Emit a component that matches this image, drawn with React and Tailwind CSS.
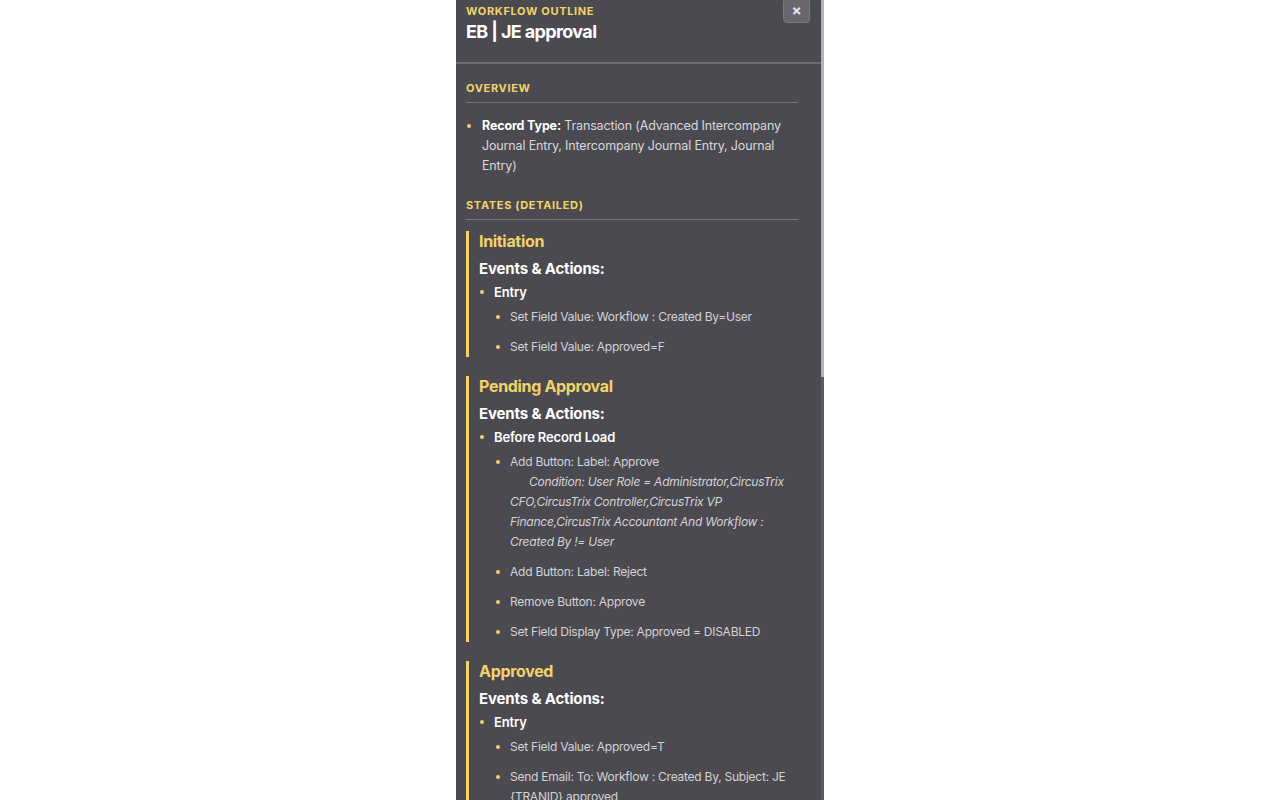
import React from 'react';

const states = [
  {
    name: 'Initiation',
    events: [
      {
        trigger: 'Entry',
        actions: [
          { text: 'Set Field Value: Workflow : Created By=User' },
          { text: 'Set Field Value: Approved=F' },
        ],
      },
    ],
  },
  {
    name: 'Pending Approval',
    events: [
      {
        trigger: 'Before Record Load',
        actions: [
          {
            text: 'Add Button: Label: Approve',
            condition:
              'Condition: User Role = Administrator,CircusTrix CFO,CircusTrix Controller,CircusTrix VP Finance,CircusTrix Accountant And Workflow : Created By != User',
          },
          { text: 'Add Button: Label: Reject' },
          { text: 'Remove Button: Approve' },
          { text: 'Set Field Display Type: Approved = DISABLED' },
        ],
      },
    ],
  },
  {
    name: 'Approved',
    events: [
      {
        trigger: 'Entry',
        actions: [
          { text: 'Set Field Value: Approved=T' },
          { text: 'Send Email: To: Workflow : Created By, Subject: JE {TRANID} approved' },
        ],
      },
    ],
  },
];

const Dot = ({ wide }) => (
  <span className={`${wide ? 'w-[16px]' : 'w-[15px]'} shrink-0 flex pt-[8px] pl-[1px]`}>
    <span className="w-[4px] h-[4px] rounded-full bg-[#f3d368]" />
  </span>
);

const SectionTitle = ({ children, className = '' }) => (
  <div className={className}>
    <div className="text-[11px] leading-4 font-bold tracking-[0.06em] uppercase text-[#f3d368]">
      {children}
    </div>
    <div className="h-px bg-[#76757b] mt-[6px]" />
  </div>
);

const StateBlock = ({ state }) => (
  <div className="border-l-[3px] border-[#f3d368] pl-[10px] mb-[19px]">
    <div className="text-[16px] leading-5 font-bold tracking-[-0.02em] text-[#f3d368]">{state.name}</div>
    <div className="text-[15px] leading-[22px] font-bold tracking-[-0.01em] text-white mt-[7px]">Events &amp; Actions:</div>
    <ul className="mt-[2px]">
      {state.events.map((ev) => (
        <li key={ev.trigger}>
          <div className="flex text-[13px] leading-5 font-semibold tracking-[-0.01em] text-white">
            <Dot />
            <span>{ev.trigger}</span>
          </div>
          <ul className="mt-[5px] pl-[16px]">
            {ev.actions.map((a, i) => (
              <li
                key={a.text}
                className={`flex text-[12px] leading-5 tracking-[-0.02em] text-[#d4d3d6] ${i < ev.actions.length - 1 ? 'mb-[10px]' : ''}`}
              >
                <Dot />
                <span>
                  {a.text}
                  {a.condition && (
                    <>
                      <br />
                      <span className="italic pl-[19px]">{a.condition}</span>
                    </>
                  )}
                </span>
              </li>
            ))}
          </ul>
        </li>
      ))}
    </ul>
  </div>
);

export default function App() {
  return (
    <div className="min-h-screen bg-white flex justify-center font-['Inter','Noto_Sans',sans-serif]">
      <div className="relative w-[368px] h-[800px] overflow-hidden bg-[#4b4a50]">
        {/* header */}
        <div className="relative pl-[10px] pr-[26px] pt-[3px] pb-[18px]">
          <div className="text-[11px] leading-4 font-bold tracking-[0.06em] text-[#f3d368]">WORKFLOW OUTLINE</div>
          <div className="text-[18px] leading-6 font-bold text-white mt-px tracking-[-0.035em]">EB | JE approval</div>
          <button className="absolute right-[14px] top-[-2px] w-[27px] h-[25px] rounded-[4px] bg-[#68676d] border border-[#7a797f] text-[#e4e4e6] text-[15px] leading-none font-bold flex items-center justify-center">
            ×
          </button>
        </div>
        <div className="h-[2px] bg-[#6c6b71] mr-[3px]" />

        {/* body */}
        <div className="pl-[10px] pr-[26px] pt-[16px]">
          <SectionTitle>Overview</SectionTitle>
          <ul className="mt-[13px]">
            <li className="flex text-[12.5px] leading-5 tracking-[-0.012em] text-[#d9d8db]">
              <Dot wide />
              <span>
                <b className="font-bold text-white">Record Type:</b> Transaction (Advanced Intercompany Journal Entry,
                Intercompany Journal Entry, Journal Entry)
              </span>
            </li>
          </ul>

          <SectionTitle className="mt-[21px]">States (Detailed)</SectionTitle>
          <div className="mt-[11px]">
            {states.map((s) => (
              <StateBlock key={s.name} state={s} />
            ))}
          </div>
        </div>

        {/* scrollbar */}
        <div className="absolute right-0 top-0 w-[3px] h-full bg-[#5c5b61]">
          <div className="w-full h-[377px] bg-[#b3b2b7]" />
        </div>
      </div>
    </div>
  );
}
